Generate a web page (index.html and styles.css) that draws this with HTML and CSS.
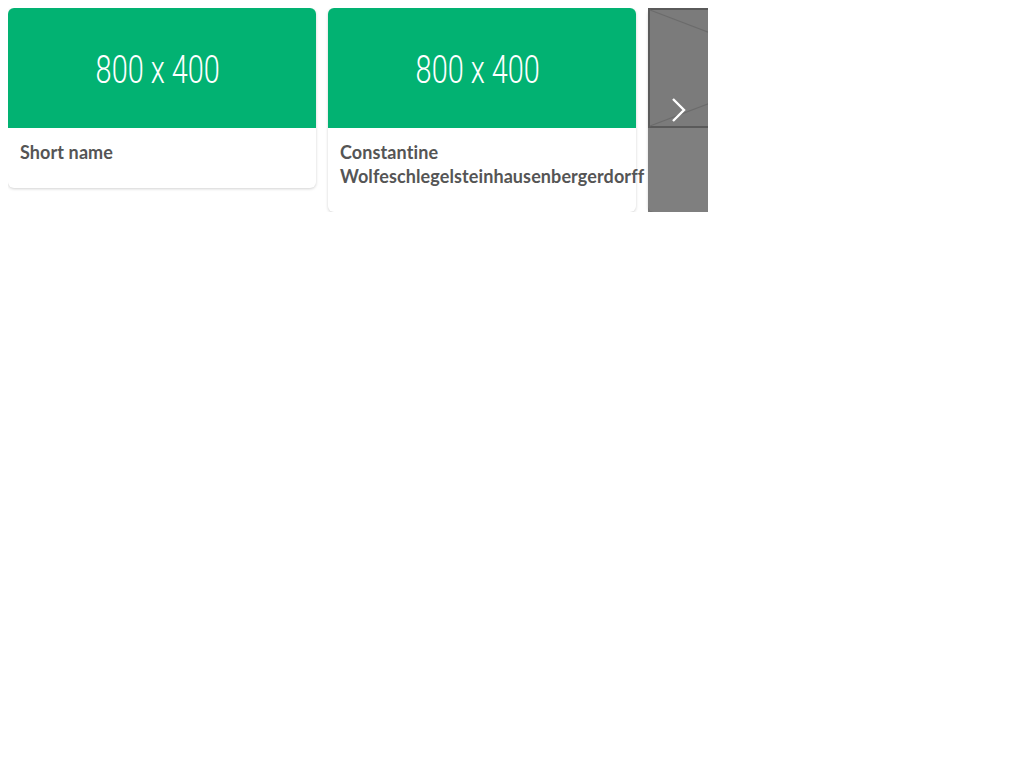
FILE: index.html
```html
<!DOCTYPE html>
<html>
<head>
<meta charset="utf-8">
<link rel="stylesheet" href="styles.css">
</head>
<body>
<div class="carousel">
  <div class="track">
    <div class="card">
      <div class="thumb"><span class="thumb-text">800 x 400</span></div>
      <div class="card-body"><div class="name">Short name</div></div>
    </div>
    <div class="card">
      <div class="thumb"><span class="thumb-text">800 x 400</span></div>
      <div class="card-body"><div class="name">Constantine Wolfeschlegelsteinhausenbergerdorff</div></div>
    </div>
    <div class="card">
      <div class="thumb thumb-empty">
        <svg class="ph" viewBox="0 0 308 120" preserveAspectRatio="none" width="308" height="120">
          <rect x="1" y="1" width="306" height="118" fill="#f6f6f6" stroke="#b4b4b4" stroke-width="2"/>
          <line x1="2" y1="2" x2="306" y2="118" stroke="#d6d6d6" stroke-width="1.2"/>
          <line x1="2" y1="118" x2="306" y2="2" stroke="#d6d6d6" stroke-width="1.2"/>
        </svg>
      </div>
      <div class="card-body"><div class="name-empty"></div></div>
    </div>
  </div>
  <button class="next" aria-label="Next">
    <svg width="16" height="26" viewBox="0 0 16 26"><polyline points="3,2 14,13 3,24" fill="none" stroke="#fff" stroke-width="2.4"/></svg>
  </button>
</div>
</body>
</html>
```
FILE: styles.css
```css
body {
  margin: 8px;
  font-family: Lato, "Liberation Sans", sans-serif;
  background: #fff;
}
.carousel {
  position: relative;
  width: 700px;
  overflow: hidden;
}
.track {
  display: flex;
  gap: 12px;
  align-items: flex-start;
}
.card {
  flex: 0 0 308px;
  width: 308px;
  background: #fff;
  border-radius: 6px;
  box-shadow: 0 1px 3px rgba(0, 0, 0, 0.18);
}
.thumb {
  height: 120px;
  background: #02b272;
  border-radius: 6px 6px 0 0;
  display: flex;
  align-items: center;
  justify-content: center;
  overflow: hidden;
}
.thumb-empty {
  background: #f6f6f6;
  border-radius: 0;
}
.ph { display: block; }
.thumb-text {
  color: #fff;
  font-family: Roboto, sans-serif;
  font-weight: 300;
  font-size: 38px;
  line-height: 40px;
  margin: 4px 8px 0 0;
  transform: scaleX(0.76);
}
.card-body {
  padding: 12px 12px 24px;
}
.name {
  font-size: 18px;
  font-weight: 700;
  line-height: 24px;
  color: #555;
  font-variant-ligatures: none;
  letter-spacing: 0.1px;
}
.name-empty {
  height: 48px;
}
.next {
  position: absolute;
  top: 0;
  right: 0;
  width: 60px;
  height: 100%;
  border: 0;
  padding: 0;
  background: rgba(0, 0, 0, 0.5);
  display: flex;
  align-items: center;
  justify-content: center;
  cursor: pointer;
}
.next svg { display: block; }
```
